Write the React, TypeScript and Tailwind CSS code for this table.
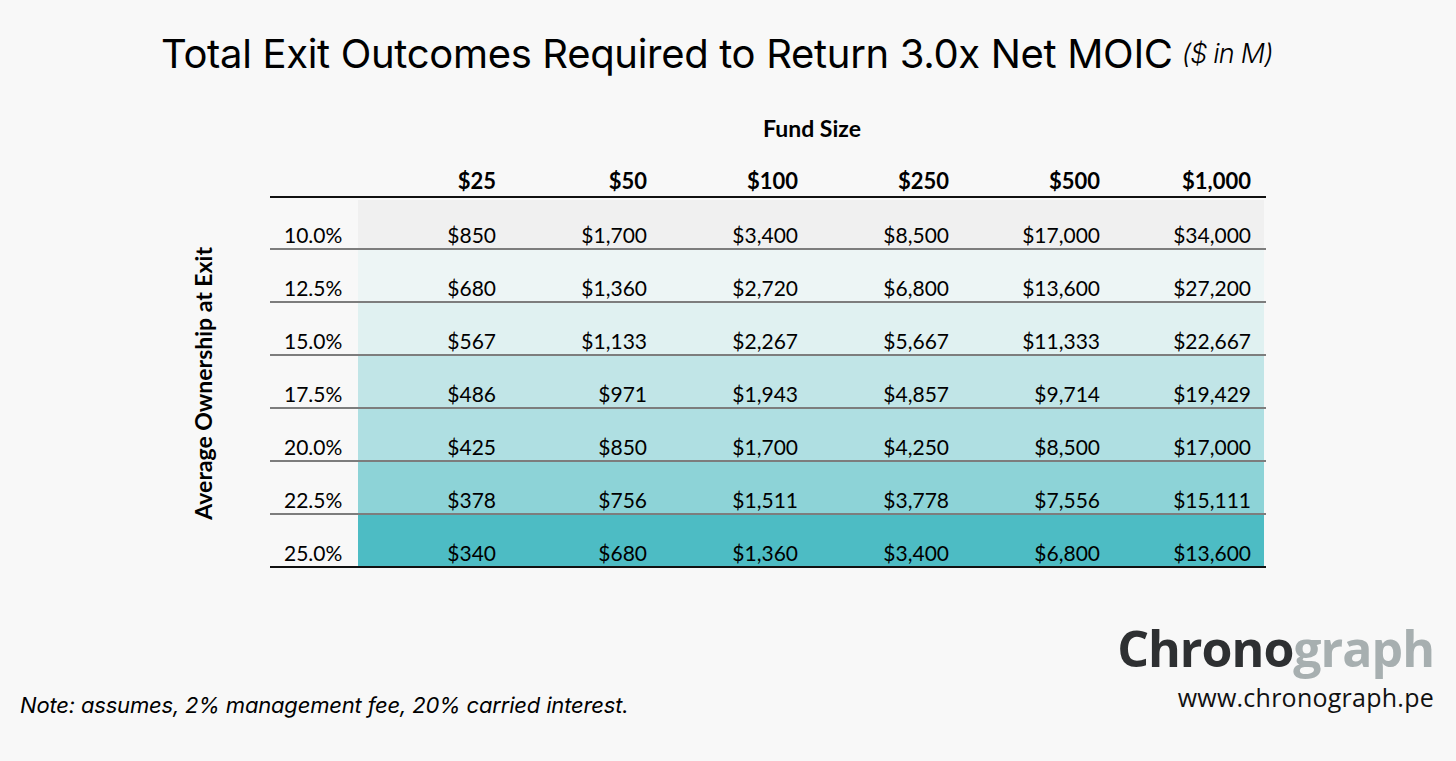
import React from "react";

const cols = ["$25", "$50", "$100", "$250", "$500", "$1,000"];
const rows: { label: string; bg: string; vals: string[] }[] = [
  { label: "10.0%", bg: "bg-[#f0f0f0]", vals: ["$850", "$1,700", "$3,400", "$8,500", "$17,000", "$34,000"] },
  { label: "12.5%", bg: "bg-[#edf5f5]", vals: ["$680", "$1,360", "$2,720", "$6,800", "$13,600", "$27,200"] },
  { label: "15.0%", bg: "bg-[#e0f1f1]", vals: ["$567", "$1,133", "$2,267", "$5,667", "$11,333", "$22,667"] },
  { label: "17.5%", bg: "bg-[#c1e5e7]", vals: ["$486", "$971", "$1,943", "$4,857", "$9,714", "$19,429"] },
  { label: "20.0%", bg: "bg-[#afdfe2]", vals: ["$425", "$850", "$1,700", "$4,250", "$8,500", "$17,000"] },
  { label: "22.5%", bg: "bg-[#8dd3d7]", vals: ["$378", "$756", "$1,511", "$3,778", "$7,556", "$15,111"] },
  { label: "25.0%", bg: "bg-[#4dbcc4]", vals: ["$340", "$680", "$1,360", "$3,400", "$6,800", "$13,600"] },
];

export default function App() {
  return (
    <div className="w-[1456px] h-[761px] bg-[#f8f8f8] flex flex-col text-black overflow-hidden">
      {/* Title */}
      <div className="h-[107px] flex items-center pl-[161px] font-['Inter',sans-serif]">
        <span className="text-[40px] leading-none tracking-[-0.008em]">
          Total Exit Outcomes Required to Return 3.0x Net MOIC
        </span>
        <span className="ml-[9px] text-[27px] leading-none italic tracking-[-0.03em] font-light">($ in M)</span>
      </div>

      {/* Table block */}
      <div className="font-['Lato',sans-serif]">
        <div className="pl-[270px]">
          <div className="w-[996px]">
            <div className="h-[42px] flex items-center pl-[88px]">
              <div className="flex-1 text-center text-[23px] font-bold leading-none">Fund Size</div>
            </div>
            <div className="h-[47px] flex items-end pb-[4px]">
              <div className="w-[88px]" />
              {cols.map((c) => (
                <div key={c} className="w-[151px] text-right pr-[13px] text-[22px] font-bold leading-none">
                  {c}
                </div>
              ))}
            </div>
            <div className="h-[2px] bg-[#111]" />
          </div>
        </div>

        <div className="flex">
          <div className="w-[270px] flex items-center pl-[192px]">
            <div className="[writing-mode:vertical-rl] rotate-180 text-[23px] font-bold leading-none whitespace-nowrap">
              Average Ownership at Exit
            </div>
          </div>
          <div className="w-[996px] pt-[2px]">
            {rows.map((r, i) => (
              <div
                key={r.label}
                className={`flex ${i === rows.length - 1 ? "border-b-2 border-[#111]" : "border-b-2 border-[#7d7d7d]"}`}
              >
                <div className={`w-[88px] pl-[14px] flex items-end pb-[3px] text-[21px] leading-none ${i === 0 ? "h-[48px]" : "h-[51px]"}`}>
                  {r.label}
                </div>
                <div className={`flex ${r.bg} w-[906px]`}>
                  {r.vals.map((v, j) => (
                    <div
                      key={j}
                      className={`w-[151px] flex items-end justify-end pr-[13px] pb-[3px] text-[21px] leading-none ${i === 0 ? "h-[48px]" : "h-[51px]"}`}
                    >
                      {v}
                    </div>
                  ))}
                </div>
              </div>
            ))}
          </div>
        </div>
      </div>

      {/* Footer */}
      <div className="flex-1 flex items-end justify-between pl-[20px] pr-[22px] pb-[45px]">
        <div className="font-['Inter',sans-serif] italic text-[22px] leading-none tracking-[-0.008em]">
          Note: assumes, 2% management fee, 20% carried interest.
        </div>
        <div className="flex flex-col items-end mb-[6px]">
          <div className="font-['Open_Sans',sans-serif] font-bold text-[50px] leading-none tracking-[-0.02em] mb-[-2px]">
            <span className="text-[#2e3032]">Chrono</span>
            <span className="text-[#a7afb0]">graph</span>
          </div>
          <div className="mt-[14px] font-['Open_Sans',sans-serif] text-[25px] leading-none tracking-[0.01em] text-[#111]">
            www.chronograph.pe
          </div>
        </div>
      </div>
    </div>
  );
}
